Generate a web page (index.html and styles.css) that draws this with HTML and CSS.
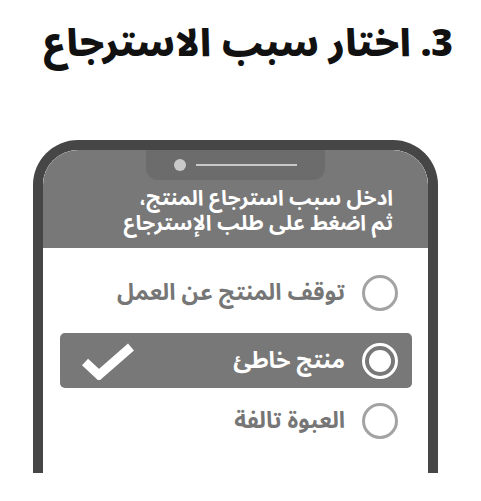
FILE: index.html
```html
<!DOCTYPE html>
<html lang="ar" dir="rtl">
<head>
    <meta charset="UTF-8">
    <meta name="viewport" content="width=device-width, initial-scale=1.0">
    <title>اختار سبب الاسترجاع</title>
    <link rel="stylesheet" href="styles.css">
</head>
<body>
    <h1 class="title">3. اختار سبب الاسترجاع</h1>

    <div class="phone">
        <div class="screen">
            <div class="header">
                <div class="notch">
                    <span class="camera"></span>
                    <span class="speaker"></span>
                </div>
                <p class="hint">ادخل سبب استرجاع المنتج،<br>ثم اضغط على طلب الإسترجاع</p>
            </div>

            <div class="options">
                <div class="option first">
                    <span class="radio"></span>
                    <span class="label">توقف المنتج عن العمل</span>
                </div>
                <div class="option selected">
                    <span class="radio"></span>
                    <span class="label">منتج خاطئ</span>
                    <svg class="check" width="52" height="38" viewBox="0 0 52 38">
                        <polyline points="3,20 17,33 49,5" fill="none" stroke="#fff" stroke-width="9"/>
                    </svg>
                </div>
                <div class="option last">
                    <span class="radio"></span>
                    <span class="label">العبوة تالفة</span>
                </div>
            </div>
        </div>
    </div>
</body>
</html>
```

FILE: styles.css
```css
body {
    margin: 0;
    background: #fff;
    font-family: "Noto Sans Arabic", "DejaVu Sans", sans-serif;
}

.title {
    margin: 0;
    padding: 18px 0 0 15px;
    height: 122px;
    box-sizing: border-box;
    font-size: 37px;
    font-weight: 900;
    color: #111;
    text-align: center;
    line-height: 52px;
}

.phone {
    width: 405px;
    height: 333px;
    margin: 18px auto 0 33px;
    box-sizing: border-box;
    border: 10px solid #464646;
    border-bottom: none;
    border-radius: 45px 45px 0 0;
    overflow: hidden;
}

.screen {
    height: 100%;
    background: #fff;
}

.header {
    height: 98px;
    background: #787878;
    display: flex;
    flex-direction: column;
    align-items: center;
}

.notch {
    width: 179px;
    height: 30px;
    background: #6c6c6c;
    border-radius: 0 0 12px 12px;
    display: flex;
    flex-direction: row-reverse;
    align-items: center;
    justify-content: center;
    gap: 10px;
}

.camera {
    width: 12px;
    height: 12px;
    border-radius: 50%;
    background: #c9c9c9;
}

.speaker {
    width: 101px;
    height: 2px;
    background: #c9c9c9;
}

.hint {
    align-self: stretch;
    margin: 6px 0 0;
    padding-right: 35px;
    color: #fff;
    font-size: 21px;
    font-weight: bold;
    line-height: 25px;
}

.options {
    padding: 17px 16px 0 17px;
}

.option {
    height: 55px;
    display: flex;
    align-items: center;
    gap: 17px;
    padding-right: 14px;
    border-radius: 5px;
}

.option.first {
    margin-bottom: 13px;
}

.option.last {
    margin-top: 5px;
}

.radio {
    width: 36px;
    height: 36px;
    box-sizing: border-box;
    border: 3px solid #a3a3a3;
    border-radius: 50%;
}

.label {
    font-size: 23px;
    font-weight: bold;
    color: #767676;
}

.selected {
    background: #787878;
}

.selected .radio {
    border: 3px solid #fff;
    padding: 4px;
    background: #fff content-box;
}

.selected .label {
    color: #fff;
    flex: 1;
}

.check {
    margin-left: 22px;
}
```
